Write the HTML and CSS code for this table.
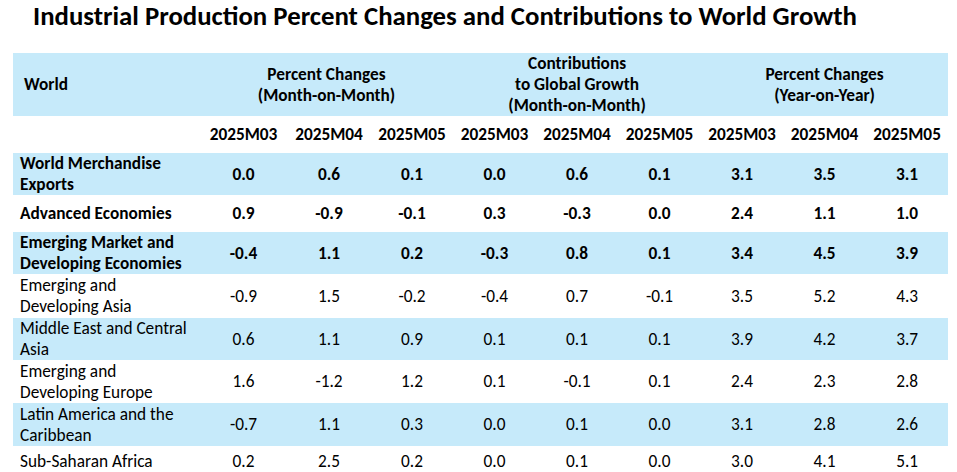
FILE: index.html
```html
<!DOCTYPE html>
<html>
<head>
<meta charset="utf-8">
<link rel="stylesheet" href="styles.css">
</head>
<body>
<h1 class="title">Industrial Production Percent Changes and Contributions to World Growth</h1>
<table class="data">
  <colgroup>
    <col class="c-label">
    <col class="c-w87"><col class="c-w84"><col class="c-w82">
    <col class="c-w83"><col class="c-w82"><col class="c-w83">
    <col class="c-w82"><col class="c-w83"><col class="c-w82">
  </colgroup>
  <thead>
    <tr class="h1 blue">
      <th class="lab-head">World</th>
      <th colspan="3">Percent Changes<br>(Month-on-Month)</th>
      <th colspan="3">Contributions<br>to Global Growth<br>(Month-on-Month)</th>
      <th colspan="3">Percent Changes<br>(Year-on-Year)</th>
    </tr>
    <tr class="h2">
      <th></th>
      <th>2025M03</th><th>2025M04</th><th>2025M05</th>
      <th>2025M03</th><th>2025M04</th><th>2025M05</th>
      <th>2025M03</th><th>2025M04</th><th>2025M05</th>
    </tr>
  </thead>
  <tbody>
    <tr class="r1 blue bold">
      <td class="lab">World Merchandise<br>Exports</td>
      <td>0.0</td><td>0.6</td><td>0.1</td><td>0.0</td><td>0.6</td><td>0.1</td><td>3.1</td><td>3.5</td><td>3.1</td>
    </tr>
    <tr class="r2 bold">
      <td class="lab">Advanced Economies</td>
      <td>0.9</td><td>-0.9</td><td>-0.1</td><td>0.3</td><td>-0.3</td><td>0.0</td><td>2.4</td><td>1.1</td><td>1.0</td>
    </tr>
    <tr class="r3 blue bold">
      <td class="lab">Emerging Market and<br>Developing Economies</td>
      <td>-0.4</td><td>1.1</td><td>0.2</td><td>-0.3</td><td>0.8</td><td>0.1</td><td>3.4</td><td>4.5</td><td>3.9</td>
    </tr>
    <tr class="r4">
      <td class="lab">Emerging and<br>Developing Asia</td>
      <td>-0.9</td><td>1.5</td><td>-0.2</td><td>-0.4</td><td>0.7</td><td>-0.1</td><td>3.5</td><td>5.2</td><td>4.3</td>
    </tr>
    <tr class="r5 blue">
      <td class="lab">Middle East and Central<br>Asia</td>
      <td>0.6</td><td>1.1</td><td>0.9</td><td>0.1</td><td>0.1</td><td>0.1</td><td>3.9</td><td>4.2</td><td>3.7</td>
    </tr>
    <tr class="r6">
      <td class="lab">Emerging and<br>Developing Europe</td>
      <td>1.6</td><td>-1.2</td><td>1.2</td><td>0.1</td><td>-0.1</td><td>0.1</td><td>2.4</td><td>2.3</td><td>2.8</td>
    </tr>
    <tr class="r7 blue">
      <td class="lab">Latin America and the<br>Caribbean</td>
      <td>-0.7</td><td>1.1</td><td>0.3</td><td>0.0</td><td>0.1</td><td>0.0</td><td>3.1</td><td>2.8</td><td>2.6</td>
    </tr>
    <tr class="r8">
      <td class="lab">Sub-Saharan Africa</td>
      <td>0.2</td><td>2.5</td><td>0.2</td><td>0.0</td><td>0.1</td><td>0.0</td><td>3.0</td><td>4.1</td><td>5.1</td>
    </tr>
  </tbody>
</table>
</body>
</html>
```
FILE: styles.css
```css
html, body {
  margin: 0;
  padding: 0;
  background: #ffffff;
}
body {
  font-family: Carlito, Calibri, "Liberation Sans", sans-serif;
  color: #000;
  overflow: hidden;
}
.title {
  margin: 0 0 0 33px;
  padding: 0;
  height: 53px;
  box-sizing: border-box;
  font-size: 26.8px;
  line-height: 32px;
  font-weight: 700;
  white-space: nowrap;
}
.data {
  margin-left: 13px;
  width: 935px;
  border-collapse: collapse;
  table-layout: fixed;
  font-size: 17.3px;
  line-height: 21px;
}
.c-label { width: 187px; }
.c-w87 { width: 87px; }
.c-w84 { width: 84px; }
.c-w82 { width: 82px; }
.c-w83 { width: 83px; }
.data th, .data td {
  padding: 0;
  text-align: center;
  vertical-align: middle;
}
.data th { font-weight: 700; }
.blue { background: #c6eafa; }
.bold td { font-weight: 700; }
.lab-head { text-align: left !important; padding-left: 11px !important; }
.data td.lab { text-align: left; padding-left: 7px; }
.h1 { height: 63px; }
.h2 { height: 37px; }
.r1 { height: 42px; }
.r2 { height: 37px; }
.r3 { height: 41px; }
.r4 { height: 44px; }
.r5 { height: 41px; }
.r6 { height: 43px; }
.r7 { height: 43px; }
.r8 { height: 30px; }
```
